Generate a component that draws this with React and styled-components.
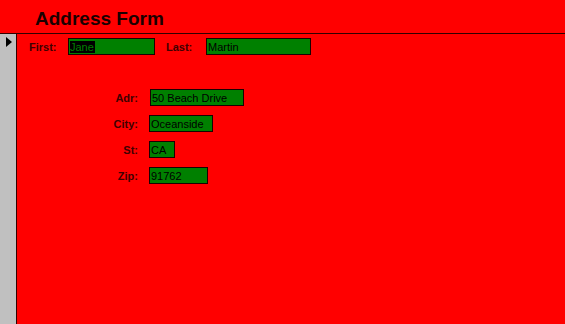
import styled, { createGlobalStyle } from "styled-components";

const GlobalStyle = createGlobalStyle`
  html, body {
    margin: 0;
    padding: 0;
    background: #ff0000;
  }
  body {
    font-family: "Liberation Sans", Arial, sans-serif;
  }
`;

const Page = styled.div`
  width: 565px;
  height: 324px;
  background: #ff0000;
  display: flex;
  flex-direction: column;
  overflow: hidden;
`;

const Header = styled.div`
  height: 34px;
  box-sizing: border-box;
  padding: 8px 0 0 35px;
  border-bottom: 1px solid #300000;
`;

const Title = styled.h1`
  margin: 0;
  font-size: 19px;
  line-height: 22px;
  font-weight: bold;
  color: #1a0000;
`;

const Body = styled.div`
  flex: 1;
  display: flex;
`;

const Selector = styled.div`
  width: 17px;
  background: #c0c0c0;
  border-right: 1px solid #300000;
  padding-top: 3px;
  box-sizing: border-box;
`;

const Arrow = styled.div`
  width: 0;
  height: 0;
  margin-left: 6px;
  border-top: 5px solid transparent;
  border-bottom: 5px solid transparent;
  border-left: 6px solid #000;
`;

const Content = styled.div`
  flex: 1;
  padding: 4px 0 0 12px;
  display: flex;
  flex-direction: column;
`;

const NameRow = styled.div`
  display: flex;
  align-items: center;
`;

const Label = styled.span`
  font-size: 11px;
  font-weight: bold;
  color: #400000;
  width: ${(p) => p.width || "auto"};
  margin-left: ${(p) => p.gap || 0}px;
`;

const Field = styled.div`
  width: ${(p) => p.width}px;
  height: 17px;
  box-sizing: border-box;
  border: 1px solid #1a0000;
  background: #008000;
  font-size: 11px;
  color: #000;
  padding-left: 1px;
  margin-left: ${(p) => p.offset || 0}px;
  display: flex;
  align-items: center;
  white-space: nowrap;
`;

const Selected = styled.span`
  background: #000;
  color: #008000;
  padding-right: 1px;
`;

const AddressGrid = styled.div`
  margin-top: 34px;
  display: grid;
  grid-template-columns: 109px auto;
  column-gap: 11px;
  row-gap: 9px;
  align-items: center;
  justify-items: start;
`;

const GridLabel = styled(Label)`
  justify-self: end;
`;

const address = [
  { label: "Adr:", value: "50 Beach Drive", width: 94, offset: 1 },
  { label: "City:", value: "Oceanside", width: 64 },
  { label: "St:", value: "CA", width: 26 },
  { label: "Zip:", value: "91762", width: 59 },
];

const App = () => {
  return (
    <>
      <GlobalStyle />
      <Page>
        <Header>
          <Title>Address Form</Title>
        </Header>
        <Body>
          <Selector>
            <Arrow />
          </Selector>
          <Content>
            <NameRow>
              <Label width="39px">First:</Label>
              <Field width={87}>
                <Selected>Jane</Selected>
              </Field>
              <Label width="40px" gap={11}>
                Last:
              </Label>
              <Field width={105}>Martin</Field>
            </NameRow>
            <AddressGrid>
              {address.flatMap((a) => [
                <GridLabel key={a.label + "l"}>{a.label}</GridLabel>,
                <Field key={a.label + "f"} width={a.width} offset={a.offset}>
                  {a.value}
                </Field>,
              ])}
            </AddressGrid>
          </Content>
        </Body>
      </Page>
    </>
  );
};

export default App;
